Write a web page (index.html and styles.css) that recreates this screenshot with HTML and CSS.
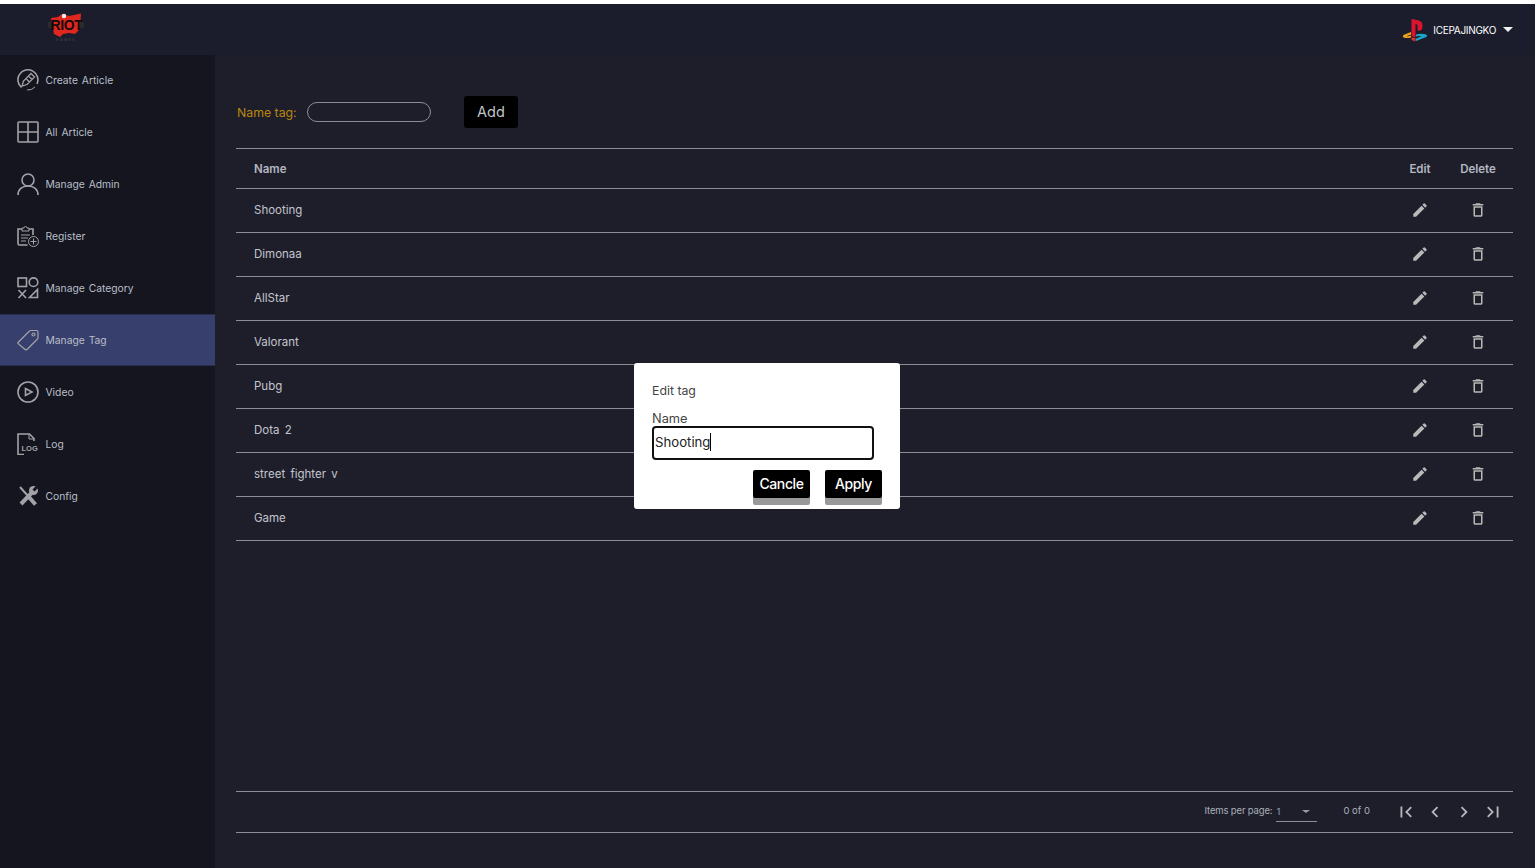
FILE: index.html
```html
<!DOCTYPE html>
<html lang="en">
<head>
<meta charset="utf-8">
<title>Manage Tag</title>
<link rel="stylesheet" href="styles.css">
</head>
<body>
<div class="app">
  <header class="topbar">
    <div class="logo">
      <svg width="38" height="30" viewBox="0 0 38 30">
        <circle cx="4" cy="12" r="3.500" fill="#2a2a30"/>
        <circle cx="34" cy="12" r="3.500" fill="#2a2a30"/>
        <path d="M4 5 L11 4 L15 1 L22 3 L34 0.500 L33.500 8 L32 17 L28 21 L22 20 L16 21 L13 24 L7 21 L5.500 13 Z" fill="#e0271f"/>
        <circle cx="17" cy="3" r="2.200" fill="#eee"/>
        <text x="19.500" y="16.500" class="logo-word">RIOT</text>
        <text x="19" y="28" class="logo-sub">GAMES</text>
      </svg>
    </div>
    <div class="user">
      <svg class="ps" width="26" height="26" viewBox="0 0 26 26">
        <path d="M9.500 2 L9.500 19 L13.500 20.500 L13.500 7 C15 7 15.500 8 15.500 9.500 L15.500 13.500 C19 14.500 20.500 12.500 20.500 9 C20.500 5 18.500 3.800 15 3 Z" fill="#d8152c"/>
        <path d="M9 15 L2.500 17.500 C0 18.800 0.500 20.500 3.500 21 C5.500 21.300 7.500 21 9 20.500 L9 18.500 L5.500 19.500 L5 19 L9 17.500 Z" fill="#e9a21b"/>
        <path d="M9.500 20.500 L13.500 21 L13.500 24.500 L9.500 23 Z" fill="#d8352c"/>
        <path d="M14 24 L14 21.500 L19.500 19.500 L16 19 L14 19.700 L14 17.500 C17 16.500 21 16.300 24 17.500 C26 18.500 25 19.800 23 20.600 Z" fill="#1aa6c8"/>
      </svg>
      <span class="user-name">ICEPAJINGKO</span>
      <span class="caret-white"></span>
    </div>
  </header>
  <div class="body-row">
    <nav class="sidebar">
      <a class="nav-item">
        <svg class="nav-icon" viewBox="0 0 22 22"><path d="M4.500 18.500 A10 10 0 1 1 20 15"/><path d="M18 18 A10 10 0 0 1 10 21" stroke-width="1"/><path d="M5 17 L6.500 12 L14 4.500 L17.500 8 L10 15.500 Z M9 9.500 L12.500 13 M11.500 7 L15 10.500" stroke-width="1.300"/></svg>
        <span>Create Article</span>
      </a>
      <a class="nav-item">
        <svg class="nav-icon" viewBox="0 0 22 22"><rect x="1" y="1" width="20" height="20" rx="1"/><path d="M11 1 V21 M1 11 H21"/></svg>
        <span>All Article</span>
      </a>
      <a class="nav-item">
        <svg class="nav-icon" viewBox="0 0 22 22"><circle cx="11" cy="7" r="6"/><path d="M1 22 C1 16.500 5 13 11 13 C17 13 21 16.500 21 22"/></svg>
        <span>Manage Admin</span>
      </a>
      <a class="nav-item">
        <svg class="nav-icon" viewBox="0 0 22 22"><path d="M10.500 20 H2.500 A1.500 1.500 0 0 1 1 18.500 V4 H5 M12 4 H16 V10"/><path d="M5 6 V3 H7 A1.500 1.500 0 0 1 10 3 H12 V6 Z" stroke-width="1"/><path d="M4 10 H13 M4 13 H11 M4 16 H9" stroke-width="1"/><circle cx="16.500" cy="16.500" r="5" stroke-width="1"/><path d="M16.500 13.500 V19.500 M13.500 16.500 H19.500" stroke-width="1"/></svg>
        <span>Register</span>
      </a>
      <a class="nav-item">
        <svg class="nav-icon" viewBox="0 0 22 22"><rect x="1" y="1" width="8.500" height="8.500"/><circle cx="16.500" cy="5.200" r="4.300"/><path d="M1.500 13 L9 21 M9 13 L1.500 21"/><path d="M12.500 20.500 L20.500 12.500 V20.500 Z"/></svg>
        <span>Manage Category</span>
      </a>
      <a class="nav-item active">
        <svg class="nav-icon" viewBox="0 0 22 22"><path d="M1 13.500 L12 2.500 Q13 1.500 14 1.500 H19.500 Q21 1.500 21 3 V8.500 Q21 9.500 20 10.500 L10.500 20 Q9 21.500 7.500 20 L1 14.500 Z" stroke-width="1.200"/><circle cx="16.500" cy="5.500" r="1.500" stroke-width="1.200"/></svg>
        <span>Manage Tag</span>
      </a>
      <a class="nav-item">
        <svg class="nav-icon" viewBox="0 0 22 22"><circle cx="11" cy="11" r="10"/><path d="M8.500 7.500 L15 11 L8.500 14.500 Z"/></svg>
        <span>Video</span>
      </a>
      <a class="nav-item">
        <svg class="nav-icon" viewBox="0 0 22 22"><path d="M7 21.500 H1 V1 H12.500 L17 5.500 V8"/><path d="M12 1 V6 H17" stroke-width="1"/><text x="4.500" y="18" class="log-word">LOG</text></svg>
        <span>Log</span>
      </a>
      <a class="nav-item">
        <svg class="nav-icon plain" viewBox="0 0 22 22">
          <path class="thin" d="M3 2 L11 11"/>
          <path class="thick" d="M11 11 L18.500 19.500"/>
          <path class="thick" d="M4 19 L15 7.500"/>
          <circle class="blob" cx="16.500" cy="5.500" r="4.500"/>
          <path class="notch" d="M16.500 5.500 L20 2"/>
        </svg>
        <span>Config</span>
      </a>
    </nav>
    <main class="main">
      <form class="tag-form">
        <label class="tag-label">Name tag:</label>
        <input class="tag-input" type="text">
        <button class="add-btn" type="button">Add</button>
      </form>
      <div class="table">
        <div class="row head"><span class="c-name">Name</span><span class="c-edit">Edit</span><span class="c-del">Delete</span></div>
        <div class="row"><span class="c-name">Shooting</span><span class="c-edit"><svg class="act" viewBox="0 0 24 24"><use href="#pen"/></svg></span><span class="c-del"><svg class="act" viewBox="0 0 24 24"><use href="#bin"/></svg></span></div>
        <div class="row"><span class="c-name">Dimonaa</span><span class="c-edit"><svg class="act" viewBox="0 0 24 24"><use href="#pen"/></svg></span><span class="c-del"><svg class="act" viewBox="0 0 24 24"><use href="#bin"/></svg></span></div>
        <div class="row"><span class="c-name">AllStar</span><span class="c-edit"><svg class="act" viewBox="0 0 24 24"><use href="#pen"/></svg></span><span class="c-del"><svg class="act" viewBox="0 0 24 24"><use href="#bin"/></svg></span></div>
        <div class="row"><span class="c-name">Valorant</span><span class="c-edit"><svg class="act" viewBox="0 0 24 24"><use href="#pen"/></svg></span><span class="c-del"><svg class="act" viewBox="0 0 24 24"><use href="#bin"/></svg></span></div>
        <div class="row"><span class="c-name">Pubg</span><span class="c-edit"><svg class="act" viewBox="0 0 24 24"><use href="#pen"/></svg></span><span class="c-del"><svg class="act" viewBox="0 0 24 24"><use href="#bin"/></svg></span></div>
        <div class="row"><span class="c-name">Dota 2</span><span class="c-edit"><svg class="act" viewBox="0 0 24 24"><use href="#pen"/></svg></span><span class="c-del"><svg class="act" viewBox="0 0 24 24"><use href="#bin"/></svg></span></div>
        <div class="row"><span class="c-name">street fighter v</span><span class="c-edit"><svg class="act" viewBox="0 0 24 24"><use href="#pen"/></svg></span><span class="c-del"><svg class="act" viewBox="0 0 24 24"><use href="#bin"/></svg></span></div>
        <div class="row"><span class="c-name">Game</span><span class="c-edit"><svg class="act" viewBox="0 0 24 24"><use href="#pen"/></svg></span><span class="c-del"><svg class="act" viewBox="0 0 24 24"><use href="#bin"/></svg></span></div>
      </div>
      <div class="spacer"></div>
      <div class="paginator">
        <span class="pg-label">Items per page:</span>
        <span class="pg-select"><span>1</span><span class="caret-grey"></span></span>
        <span class="pg-range">0 of 0</span>
        <span class="pg-btns">
          <svg class="pg-ic" viewBox="0 0 24 24"><path d="M18.410 16.590 13.820 12l4.590-4.590L17 6l-6 6 6 6zM6 6h2v12H6z"/></svg>
          <svg class="pg-ic" viewBox="0 0 24 24"><path d="M15.410 7.410 14 6l-6 6 6 6 1.410-1.410L10.830 12z"/></svg>
          <svg class="pg-ic" viewBox="0 0 24 24"><path d="M10 6 8.590 7.410 13.170 12l-4.580 4.590L10 18l6-6z"/></svg>
          <svg class="pg-ic" viewBox="0 0 24 24"><path d="M5.590 7.410 10.180 12l-4.590 4.590L7 18l6-6-6-6zM16 6h2v12h-2z"/></svg>
        </span>
      </div>
    </main>
  </div>
</div>

<div class="dialog">
  <div class="dlg-title">Edit tag</div>
  <div class="dlg-label">Name</div>
  <div class="dlg-input"><span>Shooting</span><span class="text-caret"></span></div>
  <div class="dlg-actions">
    <button class="dlg-btn" type="button">Cancle</button>
    <button class="dlg-btn" type="button">Apply</button>
  </div>
</div>

<svg class="defs" width="0" height="0">
  <defs>
    <path id="pen" d="M3 17.250V21h3.750L17.810 9.940l-3.750-3.750L3 17.250zM20.710 7.040a1 1 0 0 0 0-1.410l-2.340-2.340a1 1 0 0 0-1.410 0l-1.830 1.830 3.750 3.750 1.830-1.830z"/>
    <path id="bin" d="M6 19c0 1.100.9 2 2 2h8c1.100 0 2-.9 2-2V7H6v12zM8 9h8v10H8V9zm7.500-5-1-1h-5l-1 1H5v2h14V4h-3.500z"/>
  </defs>
</svg>
</body>
</html>
```

FILE: styles.css
```css
* { box-sizing: border-box; }
html, body { height: 100%; }
body {
  margin: 0;
  background: #fff;
  font-family: "Inter", "Liberation Sans", sans-serif;
  color: #c3c5cc;
  overflow: hidden;
}
.app {
  height: 864px;
  margin: 4px 1px 0 0;
  display: flex;
  flex-direction: column;
  background: #1e1e2b;
}
.topbar {
  height: 51px;
  flex: none;
  display: flex;
  align-items: center;
  justify-content: space-between;
  background: #1b1d2c;
}
.logo { margin-left: 47px; margin-top: -4px; display: flex; }
.logo-word { font: 900 14px "Liberation Sans", sans-serif; fill: #17090a; text-anchor: middle; letter-spacing: -0.3px; }
.logo-sub { font: 700 3.500px "Liberation Sans", sans-serif; fill: #3a3a42; text-anchor: middle; letter-spacing: 1.500px; }
.user { display: flex; align-items: center; margin-right: 22px; margin-top: 0; }
.ps { margin-right: 5px; }
.user-name { font-size: 10px; color: #fff; margin-right: 7px; letter-spacing: -0.3px; }
.caret-white {
  width: 0; height: 0;
  border-left: 5.500px solid transparent;
  border-right: 5.500px solid transparent;
  border-top: 5px solid #f2f2f2;
}
.body-row { flex: 1; display: flex; min-height: 0; }
.sidebar { width: 215px; flex: none; background: #14151f; }
.nav-item {
  height: 52px;
  display: flex;
  align-items: center;
  padding-left: 17px;
  gap: 6.500px;
  font-size: 10.300px;
  word-spacing: 1px;
  color: #b9bec8;
}
.nav-item:first-child { margin-top: -1px; }
.nav-item.active { background: #373f6d; border-top: 1px solid #2a2f52; border-bottom: 1px solid #2a2f52; }
.nav-icon {
  width: 22px;
  height: 22px;
  fill: none;
  stroke: #a2a3a8;
  stroke-width: 1.600;
  flex: none;
}
.log-word { font: 700 7.500px "Liberation Sans", sans-serif; fill: #a2a3a8; stroke: none; }
.nav-icon.plain { stroke: #a2a3a8; }
.thin { stroke-width: 2; }
.thick { stroke-width: 4; }
.blob { fill: #a2a3a8; stroke: none; }
.notch { stroke: #14151f; stroke-width: 3; }
.main {
  flex: 1;
  min-width: 0;
  padding: 41px 22px 0 21px;
  display: flex;
  flex-direction: column;
}
.tag-form { display: flex; align-items: center; height: 32px; margin-bottom: 20px; }
.tag-label { font-size: 12.300px; color: #b8860b; width: 70px; margin-left: 1px; }
.tag-input {
  width: 124px;
  height: 20px;
  border: 1px solid #8b8c93;
  border-radius: 10px;
  background: transparent;
  margin-right: 33px;
}
.add-btn {
  width: 54px;
  height: 32px;
  border: 0;
  border-radius: 3px;
  background: #000;
  color: #c2c4ca;
  font: 14.500px "Inter", sans-serif;
  padding: 0 0 2px;
}
.table { border-top: 1px solid #8d8e93; }
.row {
  height: 44px;
  display: flex;
  align-items: center;
  padding: 0 16px 2px 18px;
  border-bottom: 1px solid #8d8e93;
  font-size: 11.500px;
  word-spacing: 2px;
  color: #c3c5cc;
}
.row.head { height: 40px; padding-bottom: 0; font-weight: 600; font-size: 11.500px; color: #b4b8c0; }
.c-name { flex: 1; }
.c-edit { width: 22px; display: flex; justify-content: center; margin-right: 28px; }
.c-del { width: 38px; display: flex; justify-content: center; }
.act { width: 18px; height: 18px; fill: #b9b9b7; flex: none; }
.spacer { flex: 1; }
.paginator {
  height: 42px;
  margin-bottom: 35px;
  border-top: 1px solid #8d8e93;
  border-bottom: 1px solid #8d8e93;
  display: flex;
  align-items: center;
  justify-content: flex-end;
  font-size: 9.500px;
  color: #a9b0b8;
  padding-bottom: 4px;
}
.pg-label { margin-right: 4px; letter-spacing: -0.15px; }
.pg-select {
  width: 41px;
  height: 19px;
  border-bottom: 1px solid #8d8e93;
  display: flex;
  justify-content: space-between;
  align-items: center;
  padding: 0 7px 2px 0;
  margin-right: 26px;
  margin-top: 5px;
  color: #8ea4b4;
}
.caret-grey {
  width: 0; height: 0;
  border-left: 4px solid transparent;
  border-right: 4px solid transparent;
  border-top: 3.500px solid #9a9a9e;
}
.pg-range { margin-right: 25px; }
.pg-btns { display: flex; gap: 7px; margin-right: 9px; margin-top: 3px; }
.pg-ic { width: 22px; height: 22px; fill: #b6b7bb; flex: none; }
.dialog {
  position: fixed;
  left: 634px;
  top: 363px;
  width: 266px;
  height: 146px;
  background: #fff;
  border-radius: 3px;
  padding: 20px 18px 0;
  color: #444;
  font-size: 12.300px;
}
.dlg-title { line-height: 15px; height: 28px; }
.dlg-label { line-height: 15px; height: 15px; font-size: 12.800px; }
.dlg-input {
  width: 222px;
  height: 34px;
  border: 2px solid #111;
  border-radius: 4px;
  display: flex;
  align-items: center;
  padding: 0 0 2px 1px;
  font-size: 13.200px;
  color: #222;
}
.text-caret { width: 1px; height: 18px; background: #000; }
.dlg-actions { display: flex; justify-content: flex-end; gap: 15px; margin-top: 10px; }
.dlg-btn {
  width: 57px;
  height: 28px;
  border: 0;
  border-radius: 2px;
  background: #000;
  color: #fff;
  font: 500 14px "Inter", sans-serif;
  letter-spacing: -0.4px;
  padding: 0 0 2px;
  box-shadow: 0 7px 0 #999;
}
.defs { position: absolute; }
```
